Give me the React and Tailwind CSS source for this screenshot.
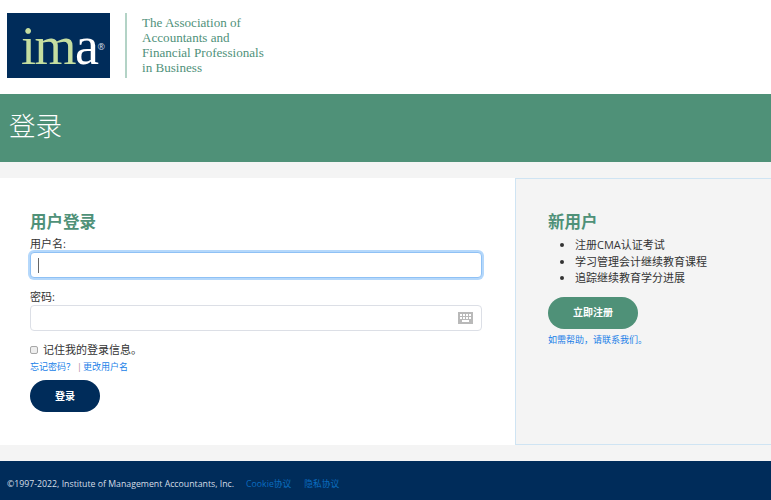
const CJK = "font-['Open_Sans','Noto_Sans_CJK_SC',sans-serif]"

function KeyboardIcon() {
  return (
    <svg width="15" height="12" viewBox="0 0 15 12" className="block">
      <rect width="15" height="12" fill="#b9b9b9" />
      <g fill="#fff">
        <rect x="2" y="2" width="2" height="2" />
        <rect x="5" y="2" width="2" height="2" />
        <rect x="8" y="2" width="2" height="2" />
        <rect x="11" y="2" width="2" height="2" />
        <rect x="2" y="5" width="2" height="2" />
        <rect x="5" y="5" width="2" height="2" />
        <rect x="8" y="5" width="2" height="2" />
        <rect x="11" y="5" width="2" height="2" />
        <rect x="4" y="8" width="7" height="2" />
      </g>
    </svg>
  )
}

export default function App() {
  return (
    <div className={`w-[771px] h-[500px] overflow-hidden bg-[#f4f4f4] ${CJK}`}>
      {/* Header */}
      <header className="h-[94px] bg-white flex items-start pt-[13px] pl-[7px]">
        <div className="w-[103px] h-[65px] shrink-0 bg-[#002c5a] flex items-start pt-[5px] pl-[14px]">
          <span className="font-['Liberation_Serif',serif] text-[54px] leading-[56px] tracking-[-1.5px] text-[#c5dea0]">
            im<span className="text-white">a</span>
          </span>
          <span className="text-[#d8dfe8] text-[9px] leading-none mt-[24px]">®</span>
        </div>
        <div className="w-[2px] h-[65px] shrink-0 bg-[#b3d3c6] ml-[15px]" />
        <p className="ml-[15px] mt-[2px] font-['Liberation_Serif',serif] text-[13.1px] leading-[15px] text-[#4f917a]">
          The Association of<br />
          Accountants and<br />
          Financial Professionals<br />
          in Business
        </p>
      </header>

      {/* Title band */}
      <div className="h-[68px] bg-[#4f9178] flex items-center pl-[9px] pb-[5px]">
        <h1 className="font-['Noto_Sans_CJK_SC',serif] font-light text-[26.5px] leading-none text-white">登录</h1>
      </div>

      <main className="mt-[16px] h-[267px] flex">
        {/* Login form */}
        <section className="w-[515px] bg-white pt-[33px] pl-[30px] pr-[33px]">
          <h2 className="text-[16.5px] leading-[22px] font-bold text-[#4f9178]">用户登录</h2>
          <label className="block text-[11px] leading-[16px] text-[#333] mt-[3px]">用户名:</label>
          <div className="h-[26px] bg-white border border-[#8fc1f5] rounded-[4px] shadow-[0_0_0_2px_#b5d8fb] flex items-center pl-[7px]">
            <div className="w-px h-[15px] bg-[#666]" />
          </div>
          <label className="block text-[11px] leading-[16px] text-[#333] mt-[11px]">密码:</label>
          <div className="h-[26px] bg-white border border-[#dcdfe6] rounded-[4px] flex items-center justify-end pr-[8px]">
            <KeyboardIcon />
          </div>
          <label className="flex items-center mt-[11px] text-[11px] leading-[16px] text-[#333]">
            <input type="checkbox" className="appearance-none w-[8px] h-[8px] m-0 bg-[#eeeeee] border border-[#a8a8a8] rounded-[2px]" />
            <span className="ml-[5px]">记住我的登录信息。</span>
          </label>
          <div className="flex items-center mt-[2px] text-[9px] leading-[14px] text-[#1a7fe8]">
            <a>忘记密码？</a>
            <span className="text-[#b08a9a] ml-[2px] mr-[1px]">|</span>
            <a>更改用户名</a>
          </div>
          <button className="block w-[70px] h-[32px] mt-[6px] rounded-full bg-[#002c5a] text-white text-[10px] font-bold">登录</button>
        </section>

        {/* New user */}
        <aside className="flex-1 bg-[#f4f4f4] border-l border-t border-b border-[#cfe4f3] pt-[32px] pl-[32px]">
          <h2 className="text-[16.5px] leading-[22px] font-bold text-[#4f9178]">新用户</h2>
          <ul className="mt-[4px] pl-[27px] list-disc text-[11px] leading-[16.5px] text-[#333]">
            <li>注册CMA认证考试</li>
            <li>学习管理会计继续教育课程</li>
            <li>追踪继续教育学分进展</li>
          </ul>
          <button className="block w-[90px] h-[32px] mt-[10px] rounded-full bg-[#4f9178] text-white text-[10px] font-bold">立即注册</button>
          <p className="mt-[4px] text-[9px] leading-[14px] text-[#1a7fe8]">如需帮助，请联系我们。</p>
        </aside>
      </main>

      {/* Footer */}
      <footer className="mt-[16px] h-[39px] bg-[#002c5a] flex items-center pl-[7px] pt-[9px] text-[8.75px]">
        <span className="text-[#d5dde6]">©1997-2022, Institute of Management Accountants, Inc.</span>
        <a className="ml-[12px] text-[#0b6cc0]">Cookie协议</a>
        <a className="ml-[13px] text-[#0b6cc0]">隐私协议</a>
      </footer>
    </div>
  )
}
